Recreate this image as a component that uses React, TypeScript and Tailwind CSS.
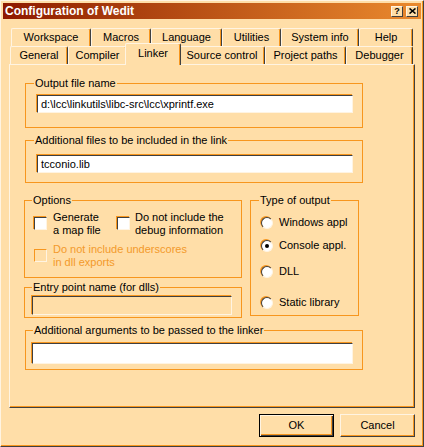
import React from 'react'

const tabsBack = [
    { label: 'Workspace', w: 'w-[80px]' },
    { label: 'Macros', w: 'w-[60px]' },
    { label: 'Language', w: 'w-[71px]' },
    { label: 'Utilities', w: 'w-[59px]' },
    { label: 'System info', w: 'w-[78px]' },
    { label: 'Help', w: 'w-[54px]' },
]

const tabsFront = [
    { label: 'General', w: 'w-[58px]' },
    { label: 'Compiler', w: 'w-[59px]' },
    { label: 'Linker', w: 'w-[56px]', selected: true },
    { label: 'Source control', w: 'w-[86px]' },
    { label: 'Project paths', w: 'w-[81px]' },
    { label: 'Debugger', w: 'w-[67px]' },
]

type TabProps = { label: string; w: string; selected?: boolean }

const Tab = ({ label, w, selected }: TabProps) => {
    if (selected) {
        return (
            <div className={`${w} relative z-10 -mx-[2px] -mb-[1px] h-[22px] pb-[3px] bg-[#ffdea8] border-l border-t border-r border-[#fff4e2] border-r-[#404040] shadow-[inset_-1px_0_0_#f7961e] rounded-t-[2px] flex items-center justify-center`}>
                {label}
            </div>
        )
    }
    return (
        <div className={`${w} h-full border-l border-t border-r border-[#fff4e2] border-r-[#404040] shadow-[inset_-1px_0_0_#f7961e] rounded-t-[2px] flex items-center justify-center`}>
            {label}
        </div>
    )
}

const Field = ({ value, className }: { value?: string; className: string }) => (
    <div className={`${className} bg-white border border-t-[#404040] border-l-[#404040] border-r-[#fff4e2] border-b-[#fff4e2] shadow-[-1px_-1px_0_#f7961e] pl-[3px] flex items-center whitespace-nowrap overflow-hidden`}>
        {value}
    </div>
)

const Check = ({ disabled }: { disabled?: boolean }) => (
    <div className={`mt-[6px] w-[13px] h-[13px] shrink-0 border border-t-[#404040] border-l-[#404040] border-r-[#fff4e2] border-b-[#fff4e2] shadow-[-1px_-1px_0_#f7961e] ${disabled ? 'bg-[#ffdea8] border-t-[#f7961e] border-l-[#f7961e] shadow-none' : 'bg-white'}`} />
)

const Radio = ({ label, checked, mt }: { label: string; checked?: boolean; mt: string }) => (
    <div className={`${mt} flex items-center gap-[6px] h-[13px]`}>
        <div className="w-[12px] h-[12px] rounded-full bg-white border border-t-[#404040] border-l-[#404040] border-r-[#fff4e2] border-b-[#fff4e2] shadow-[-1px_-1px_0_#f7961e] flex items-center justify-center">
            {checked && <div className="w-[4px] h-[4px] rounded-full bg-black" />}
        </div>
        <span>{label}</span>
    </div>
)

export default function App() {
    return (
        <div className="w-[424px] h-[447px] bg-[#ffdea8] border border-[#fff4e2] border-r-[#404040] border-b-[#404040] shadow-[inset_-1px_-1px_0_#f7961e] p-[2px] flex flex-col font-['Liberation_Sans',Arial,sans-serif] text-[11px] leading-[13px] text-black">
            {/* caption */}
            <div className="h-[16px] shrink-0 bg-linear-to-r from-[#8e1800] to-[#ea8a2e] pl-[2px] pr-[3px] flex items-center justify-between">
                <span className="text-white font-bold text-[12px]">Configuration of Wedit</span>
                <div className="flex gap-[3px]">
                    <div className="w-[12px] h-[11px] bg-[#ffdea8] border border-[#fff4e2] border-r-[#404040] border-b-[#404040] flex items-center justify-center text-[9px] font-bold leading-none">?</div>
                    <div className="w-[12px] h-[11px] bg-[#ffdea8] border border-[#fff4e2] border-r-[#404040] border-b-[#404040] flex items-center justify-center">
                        <svg width="7" height="6" viewBox="0 0 7 6">
                            <path d="M0.5 0.5 L6.5 5.5 M6.5 0.5 L0.5 5.5" stroke="black" strokeWidth="1.6" />
                        </svg>
                    </div>
                </div>
            </div>

            <div className="flex-1 px-[6px] pt-[9px] flex flex-col">
                {/* tabs */}
                <div className="h-[18px] pl-[2px] flex">
                    {tabsBack.map(t => <Tab key={t.label} {...t} />)}
                </div>
                <div className="h-[18px] pl-[1px] flex items-end">
                    {tabsFront.map(t => <Tab key={t.label} {...t} />)}
                </div>

                {/* page */}
                <div className="h-[344px] border border-[#fff4e2] border-r-[#404040] border-b-[#404040] shadow-[inset_-1px_-1px_0_#f7961e] pl-[14px] flex flex-col">
                    <fieldset className="mt-[12px] ml-[1px] w-[338px] h-[51px] border border-[#f7961e]">
                        <legend className="ml-[8px] px-[1px]">Output file name</legend>
                        <div className="pl-[11px]">
                            <Field className="mt-[5px] w-[316px] h-[18px]" value={'d:\\lcc\\linkutils\\libc-src\\lcc\\xprintf.exe'} />
                        </div>
                    </fieldset>

                    <fieldset className="mt-[6px] ml-[1px] w-[338px] h-[49px] border border-[#f7961e]">
                        <legend className="ml-[8px] px-[1px]">Additional files to be included in the link</legend>
                        <div className="pl-[11px]">
                            <Field className="mt-[8px] w-[316px] h-[18px]" value="tcconio.lib" />
                        </div>
                    </fieldset>

                    <div className="mt-[11px] flex items-start gap-[8px]">
                        <div className="flex flex-col">
                            <fieldset className="w-[218px] h-[84px] border border-[#f7961e]">
                                <legend className="ml-[7px] px-[1px]">Options</legend>
                                <div className="pl-[9px]">
                                    <div className="mt-[4px] flex">
                                        <div className="w-[83px] flex items-start">
                                            <Check />
                                            <span className="ml-[6px]">Generate<br />a map file</span>
                                        </div>
                                        <div className="flex items-start">
                                            <Check />
                                            <span className="ml-[5px]">Do not include the<br />debug information</span>
                                        </div>
                                    </div>
                                    <div className="mt-[6px] flex items-start">
                                        <Check disabled />
                                        <span className="ml-[6px] text-[#f39a2b]">Do not include underscores<br />in dll exports</span>
                                    </div>
                                </div>
                            </fieldset>

                            <fieldset className="mt-[3px] w-[218px] h-[37px] border border-[#f7961e]">
                                <legend className="ml-[7px] px-[1px]">Entry point name (for dlls)</legend>
                                <div className="pl-[7px]">
                                    <div className="mt-[2px] w-[200px] h-[19px] bg-[#ffdea8] border border-t-[#404040] border-l-[#404040] border-r-[#fff4e2] border-b-[#fff4e2] shadow-[-1px_-1px_0_#f7961e]" />
                                </div>
                            </fieldset>
                        </div>

                        <fieldset className="w-[109px] h-[122px] border border-[#f7961e]">
                            <legend className="ml-[8px] px-[1px]">Type of output</legend>
                            <div className="pl-[10px] flex flex-col">
                                <Radio mt="mt-[9px]" label="Windows appl" />
                                <Radio mt="mt-[10px]" label="Console appl." checked />
                                <Radio mt="mt-[13px]" label="DLL" />
                                <Radio mt="mt-[18px]" label="Static library" />
                            </div>
                        </fieldset>
                    </div>

                    <fieldset className="mt-[6px] ml-[1px] w-[338px] h-[46px] border border-[#f7961e]">
                        <legend className="ml-[7px] px-[1px]">Additional arguments to be passed to the linker</legend>
                        <div className="pl-[6px]">
                            <Field className="mt-[6px] w-[321px] h-[21px]" />
                        </div>
                    </fieldset>
                </div>

                {/* buttons */}
                <div className="mt-[6px] flex justify-end gap-[6px]">
                    <button className="w-[75px] h-[23px] bg-[#ffdea8] border border-black shadow-[inset_1px_1px_0_#fff4e2,inset_-1px_-1px_0_#404040,inset_-2px_-2px_0_#f7961e] flex items-center justify-center">
                        OK
                    </button>
                    <button className="w-[75px] h-[23px] bg-[#ffdea8] border border-[#fff4e2] border-r-[#404040] border-b-[#404040] shadow-[inset_-1px_-1px_0_#f7961e] flex items-center justify-center">
                        Cancel
                    </button>
                </div>
            </div>
        </div>
    )
}
